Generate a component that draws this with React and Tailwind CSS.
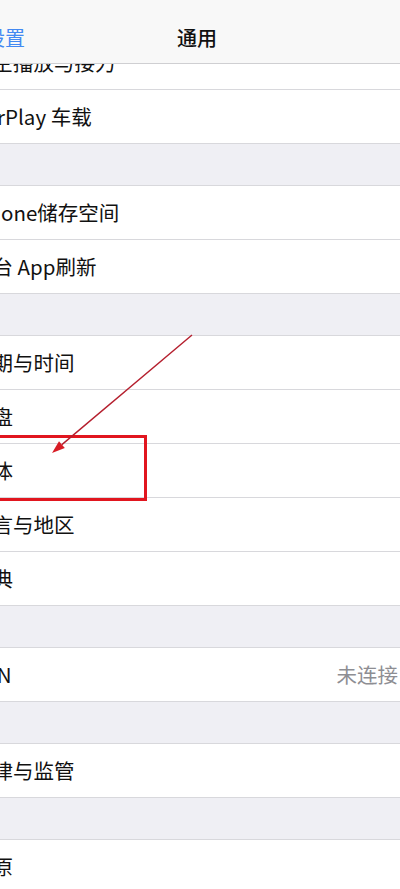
import React from "react";

const font = {
  fontFamily: '"Noto Sans CJK SC", "Noto Sans", sans-serif',
};

const Row = ({ label, value, first, shift = "-ml-[28px]" }) => (
  <div
    className={`h-[54px] shrink-0 bg-white border-b border-[#d8d8dc] flex items-center justify-between pr-[2px] ${
      first ? "-mt-[28px]" : ""
    }`}
  >
    <span className={`${shift} text-[20.5px] text-[#111] whitespace-nowrap`}>
      {label}
    </span>
    {value && (
      <span className="text-[20.5px] text-[#8e8e93] whitespace-nowrap">
        {value}
      </span>
    )}
  </div>
);

const Gap = () => (
  <div className="h-[42px] shrink-0 bg-[#efeff4] border-b border-[#d8d8dc]" />
);

export default function App() {
  return (
    <div
      style={font}
      className="relative w-[400px] h-[889px] overflow-hidden bg-[#efeff4] flex flex-col"
    >
      {/* Nav bar */}
      <div className="h-[64px] shrink-0 bg-[#f8f8f8] border-b border-[#cfcfd2] flex items-center pt-[12px] relative">
        <span className="absolute left-[-15px] top-[25px] text-[20px] text-[#4389f2] leading-[26px]">
          设置
        </span>
        <div className="flex-1 flex justify-center pr-[6px]">
          <span className="text-[20px] font-medium text-[#111]">通用</span>
        </div>
      </div>

      {/* List */}
      <div className="flex-1 overflow-hidden flex flex-col">
        <Row label="隔空播放与接力" first />
        <Row label="AirPlay 车载" shift="-ml-[21px]" />
        <Gap />
        <Row label="iPhone储存空间" shift="-ml-[30px]" />
        <Row label="后台 App刷新" />
        <Gap />
        <Row label="日期与时间" />
        <Row label="键盘" />
        <Row label="字体" />
        <Row label="语言与地区" />
        <Row label="词典" />
        <Gap />
        <Row label="VPN" value="未连接" />
        <Gap />
        <Row label="法律与监管" />
        <Gap />
        <Row label="还原" />
      </div>

      {/* Annotation: highlight box */}
      <div className="absolute left-[-4px] top-[435px] w-[151px] h-[66px] border-[3px] border-[#e1161f] pointer-events-none" />

      {/* Annotation: arrow */}
      <svg
        className="absolute inset-0 pointer-events-none"
        width="400"
        height="889"
        viewBox="0 0 400 889"
      >
        <line
          x1="192"
          y1="335"
          x2="61.9"
          y2="444.6"
          stroke="#b51f2e"
          strokeWidth="1.4"
        />
        <polygon points="52,453 64.8,448 59,441.2" fill="#d81d26" />
      </svg>
    </div>
  );
}
